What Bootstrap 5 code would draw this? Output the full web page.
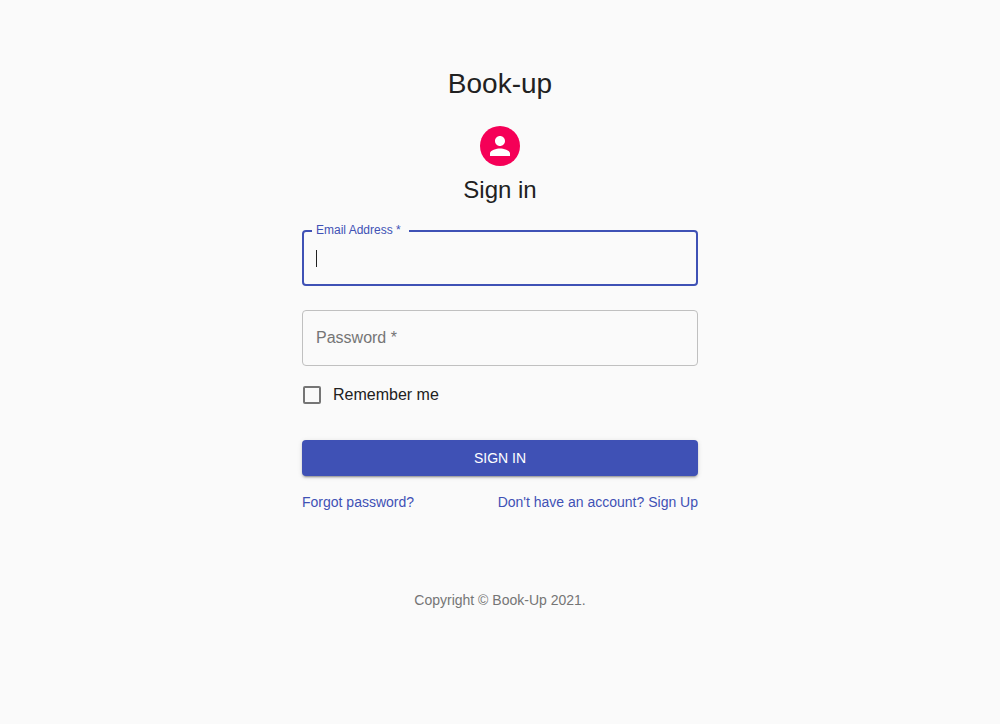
<!DOCTYPE html>
<html lang="en">
<head>
<meta charset="utf-8">
<meta name="viewport" content="width=device-width, initial-scale=1">
<title>Book-up - Sign in</title>
<link href="https://cdn.jsdelivr.net/npm/bootstrap@5.3.0/dist/css/bootstrap.min.css" rel="stylesheet">
<style>
  :root { --indigo: #3f51b5; --pink: #f50057; --ink: #212121; }
  body { background: #fafafa; color: var(--ink); font: 16px/24px "Liberation Sans", Arial, sans-serif; }
  .signin { max-width: 444px; padding: 64px 24px; }
  .brand { font-size: 28px; line-height: 40px; margin-bottom: 22px; }
  .avatar { width: 40px; height: 40px; background: var(--pink); }
  .heading { font-size: 24px; line-height: 32px; margin: 8px 0 24px; }
  .field { height: 56px; margin-bottom: 24px; }
  .field .form-control { height: 56px; padding: 0 14px; border: 1px solid #c0c0c0; border-radius: 4px; background-color: transparent; color: var(--ink); box-shadow: none; }
  .field .form-control.active { border: 2px solid var(--indigo); padding: 0 12px; caret-color: transparent; }
  .active:placeholder-shown { background: linear-gradient(var(--ink), var(--ink)) 12px 18px / 1px 17px no-repeat; }
  .float-label { top: -8px; left: 10px; padding: 0 8px 0 4px; background: #fafafa; color: var(--indigo); font-size: 12px; line-height: 16px; }
  .rest-label { top: 16px; left: 14px; color: #757575; pointer-events: none; }
  .form-control:not(:placeholder-shown) + .rest-label { visibility: hidden; }
  .remember { margin: -7px 0 33px 1px; gap: 12px; }
  .remember .form-check-input { width: 18px; height: 18px; margin: 0; border: 2px solid #757575; border-radius: 2px; background-color: transparent; }
  .btn-signin, .btn-signin:hover { background: var(--indigo); color: #fff; }
  .btn-signin { height: 36px; padding: 0; border: 0; border-radius: 4px; font-size: 14px; line-height: 24px; font-weight: 500; box-shadow: 0 3px 1px -2px rgba(0,0,0,.2), 0 2px 2px rgba(0,0,0,.14), 0 1px 5px rgba(0,0,0,.12); }
  .small-links { margin-top: 16px; font-size: 14px; line-height: 20px; }
  .small-links a { color: var(--indigo); }
  .copyright { margin: 78px 0 0; font-size: 14px; line-height: 20px; color: #757575; }
</style>
</head>
<body>
<main class="signin container-fluid mx-auto">
  <header class="d-flex flex-column align-items-center">
    <h1 class="brand fw-normal">Book-up</h1>
    <div class="avatar rounded-circle d-flex align-items-center justify-content-center">
      <svg width="30" height="30" viewBox="0 0 24 24" fill="#fff" aria-hidden="true"><path d="M12 12c2.21 0 4-1.79 4-4s-1.79-4-4-4-4 1.79-4 4 1.79 4 4 4zm0 2c-2.67 0-8 1.34-8 4v2h16v-2c0-2.66-5.33-4-8-4z"/></svg>
    </div>
    <h2 class="heading fw-normal">Sign in</h2>
  </header>
  <form>
    <div class="field position-relative">
      <input type="email" class="form-control active" id="email" placeholder=" " autocomplete="email" required>
      <label class="float-label position-absolute" for="email">Email Address *</label>
    </div>
    <div class="field position-relative">
      <input type="password" class="form-control" id="password" placeholder=" " required>
      <label class="rest-label position-absolute" for="password">Password *</label>
    </div>
    <div class="remember d-flex align-items-center">
      <input type="checkbox" class="form-check-input" id="remember">
      <label for="remember">Remember me</label>
    </div>
    <button type="submit" class="btn btn-signin w-100">SIGN IN</button>
    <div class="small-links d-flex justify-content-between">
      <a href="#" class="text-decoration-none">Forgot password?</a>
      <a href="#" class="text-decoration-none">Don't have an account? Sign Up</a>
    </div>
  </form>
  <footer><p class="copyright text-center">Copyright © Book-Up 2021.</p></footer>
</main>
<script src="https://cdn.jsdelivr.net/npm/bootstrap@5.3.0/dist/js/bootstrap.bundle.min.js"></script>
</body>
</html>
